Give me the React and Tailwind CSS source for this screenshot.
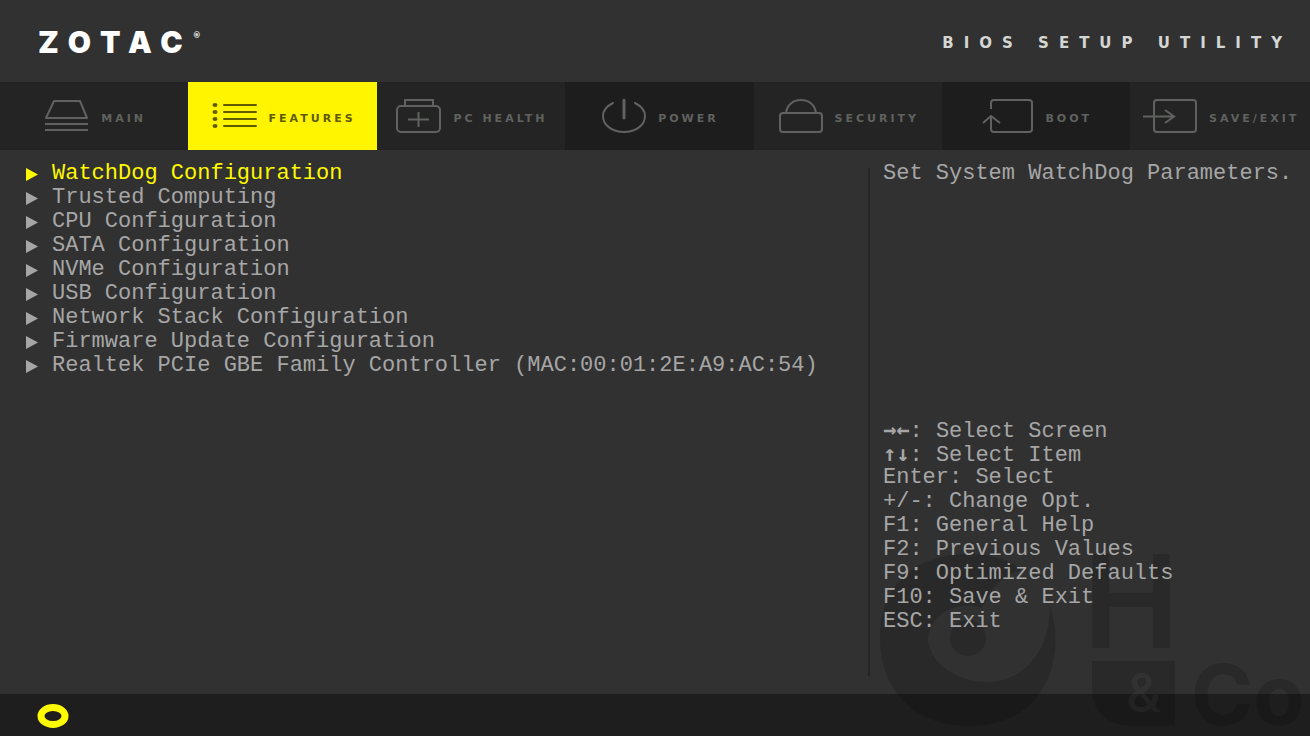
import { clsx } from 'clsx';

const MainIcon = () => (
  <svg width="45" height="34" viewBox="0 0 45 34" fill="none" stroke="currentColor" strokeWidth="2">
    <path d="M10 2h26l7 17H2z" strokeLinejoin="round" />
    <path d="M1 25h43M1 31h43" />
  </svg>
);

const FeaturesIcon = () => (
  <svg width="45" height="34" viewBox="0 0 45 34" fill="currentColor">
    {[6, 13, 20, 27].map((y) => (
      <g key={y}>
        <ellipse cx="3" cy={y} rx="2.5" ry="2" />
        <rect x="11" y={y - 1} width="34" height="2" rx="1" />
      </g>
    ))}
  </svg>
);

const HealthIcon = () => (
  <svg width="45" height="34" viewBox="0 0 45 34" fill="none" stroke="currentColor" strokeWidth="2">
    <rect x="1" y="7" width="43" height="26" rx="4" />
    <path d="M9 7V1h28v6M22.500 13v15M12 20.500h21" />
  </svg>
);

const PowerIcon = () => (
  <svg width="44" height="34" viewBox="0 0 44 34" fill="none" stroke="currentColor" strokeWidth="2" strokeLinecap="round">
    <path d="M11 4C5 7 1 12 1 17c0 9 9 16 21 16s21-7 21-16c0-5-4-10-10-13" />
    <path d="M22 1v18" strokeWidth="3" />
  </svg>
);

const SecurityIcon = () => (
  <svg width="44" height="34" viewBox="0 0 44 34" fill="none" stroke="currentColor" strokeWidth="2">
    <rect x="1" y="14" width="42" height="19" rx="3" />
    <path d="M7 14C8 6 14 1 22 1s14 5 15 13" />
  </svg>
);

const BootIcon = () => (
  <svg width="51" height="34" viewBox="0 0 51 34" fill="none" stroke="currentColor" strokeWidth="2">
    <path d="M9 10V4c0-2 1-3 3-3h35c2 0 3 1 3 3v26c0 2-1 3-3 3H12c-2 0-3-1-3-3V17" />
    <path d="M1 24l8-7 9 7" />
  </svg>
);

const ExitIcon = () => (
  <svg width="54" height="34" viewBox="0 0 54 34" fill="none" stroke="currentColor" strokeWidth="2">
    <rect x="11" y="1" width="42" height="32" rx="3" />
    <path d="M0 17.500h31M22 11l9 6.500-9 6.500" />
  </svg>
);

const tabs = [
  { label: 'MAIN', icon: MainIcon },
  { label: 'FEATURES', icon: FeaturesIcon, active: true },
  { label: 'PC HEALTH', icon: HealthIcon },
  { label: 'POWER', icon: PowerIcon, dark: true },
  { label: 'SECURITY', icon: SecurityIcon },
  { label: 'BOOT', icon: BootIcon, dark: true },
  { label: 'SAVE/EXIT', icon: ExitIcon, last: true }
];

const menuItems = [
  'WatchDog Configuration',
  'Trusted Computing',
  'CPU Configuration',
  'SATA Configuration',
  'NVMe Configuration',
  'USB Configuration',
  'Network Stack Configuration',
  'Firmware Update Configuration',
  'Realtek PCIe GBE Family Controller (MAC:00:01:2E:A9:AC:54)'
];

const helpKeys = [
  { keys: '→←', action: 'Select Screen', arrows: true },
  { keys: '↑↓', action: 'Select Item', arrows: true },
  { keys: 'Enter', action: 'Select' },
  { keys: '+/-', action: 'Change Opt.' },
  { keys: 'F1', action: 'General Help' },
  { keys: 'F2', action: 'Previous Values' },
  { keys: 'F9', action: 'Optimized Defaults' },
  { keys: 'F10', action: 'Save & Exit' },
  { keys: 'ESC', action: 'Exit' }
];

// Faint company mark over the bottom right corner
const Watermark = () => (
  <svg
    className="pointer-events-none absolute right-0 bottom-0 font-['Inter',sans-serif] text-black opacity-15"
    width="440"
    height="196"
    viewBox="0 0 440 196"
    fill="currentColor"
    aria-hidden="true"
  >
    <path d="M180 66C196 112 180 186 98 186C45 186 10 150 10 98C10 45 45 14 98 14C122 14 140 20 152 30C130 34 120 52 112 68C80 60 58 78 58 102C64 128 90 142 118 142C150 142 180 115 180 66Z" />
    <circle cx="98" cy="98" r="18" />
    <text x="213" y="108" fontSize="129" fontWeight="600">H</text>
    <path d="M222 121h83v65h-42c-26 0-41-15-41-38z" />
    <text x="256" y="172" fontSize="54" fontWeight="500" fill="#3c3c3c">&amp;</text>
    <text x="321" y="185" fontSize="84" fontWeight="700">Co</text>
  </svg>
);

export default function App() {
  return (
    <div className="relative flex min-h-screen flex-col overflow-hidden bg-[#313131] text-[#a6a6a6]">
      {/* Header */}
      <header className="flex h-[82px] items-center justify-between pr-[18px] pl-[38px] font-['DejaVu_Sans',sans-serif] font-bold">
        <div className="flex items-start pt-0.5 text-white">
          <span className="font-['Inter',sans-serif] text-[30px] leading-10 font-black tracking-[10px]">ZOTAC</span>
          <span className="mt-2 text-[8px] leading-3">®</span>
        </div>
        <h1 className="mt-1 text-[15px] leading-5 tracking-[10px] text-[#d4d6d4]">
          BIOS SETUP UTILITY
        </h1>
      </header>

      {/* Tabs */}
      <nav className="flex h-[68px] font-['DejaVu_Sans',sans-serif]">
        {tabs.map((tab) => (
          <button
            key={tab.label}
            type="button"
            className={clsx(
              'flex min-w-0 basis-0 items-center justify-center gap-3 pl-0.5 text-[11px] leading-4 font-bold tracking-[3px] whitespace-nowrap',
              tab.last ? 'grow-20' : 'grow-21',
              tab.active && 'bg-[#fff500] text-[#5f5a00]',
              !tab.active && 'text-[#5f625f]',
              !tab.active && (tab.dark ? 'bg-[#1d1d1d]' : 'bg-[#242424]')
            )}
          >
            <span className="shrink-0">
              <tab.icon />
            </span>
            <span className="mt-1.5">{tab.label}</span>
          </button>
        ))}
      </nav>

      {/* Content */}
      <main className="flex grow font-['Liberation_Mono',monospace] text-[22px] leading-6">
        <ul className="grow pt-3 pl-[26px]">
          {menuItems.map((item, index) => (
            <li key={item}>
              <button
                type="button"
                className={clsx('flex items-center gap-[14px] whitespace-nowrap', index === 0 && 'text-[#fff800]')}
              >
                <svg width="12" height="13" viewBox="0 0 12 13" fill="currentColor">
                  <path d="M0 0l12 6.500L0 13z" />
                </svg>
                {item}
              </button>
            </li>
          ))}
        </ul>
        <div className="my-[18px] w-0.5 bg-[#252525]" />
        <aside className="relative z-10 flex w-[440px] shrink-0 flex-col justify-between pt-3 pb-[60px] pl-[13px]">
          <p className="whitespace-nowrap">Set System WatchDog Parameters.</p>
          <ul>
            {helpKeys.map((help) => (
              <li key={help.keys} className="h-6">
                <span className={clsx(help.arrows && "font-['DejaVu_Sans_Mono',monospace] font-bold")}>{help.keys}</span>
                : {help.action}
              </li>
            ))}
          </ul>
        </aside>
      </main>

      {/* Footer */}
      <footer className="flex h-[42px] items-center bg-[#1e1e1e] pl-[37px]">
        <svg width="32" height="26" viewBox="0 0 32 26" fill="none" stroke="#fffb00" strokeWidth="7">
          <ellipse cx="16" cy="14" rx="12" ry="8.500" />
        </svg>
      </footer>

      <Watermark />
    </div>
  );
}
